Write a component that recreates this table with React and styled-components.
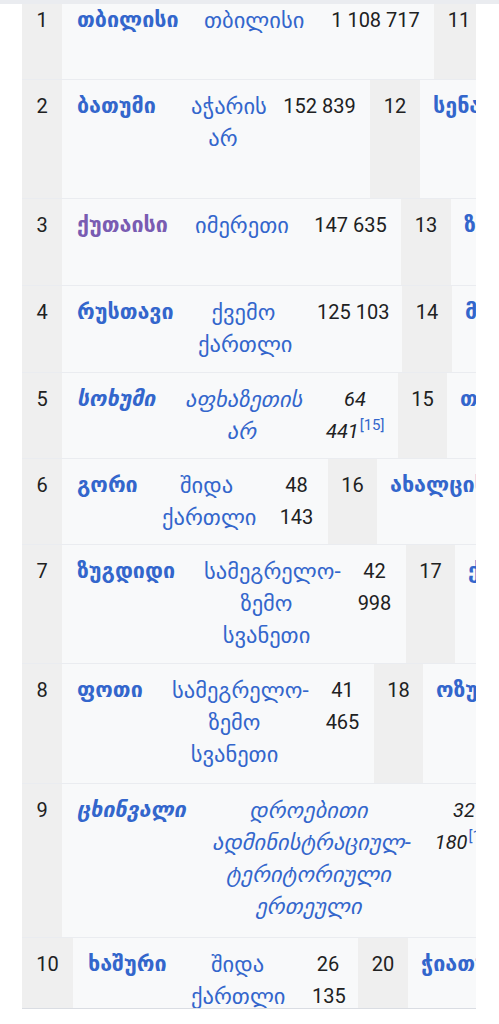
import React from "react";
import styled, { createGlobalStyle } from "styled-components";

const linkBlue = "#3366cc";
const visited = "#795cb2";
const textColor = "#202122";
const cellGray = "#efefef";
const cellLight = "#f8f9fa";

const GlobalStyle = createGlobalStyle`
    html, body {
        margin: 0;
        padding: 0;
        background: #fff;
    }
    body {
        font-family: Roboto, "Noto Sans", "DejaVu Sans", sans-serif;
        font-size: 20px;
        line-height: 32px;
        color: ${textColor};
    }
`;

const Page = styled.div`
    width: 499px;
    height: 1024px;
    overflow: hidden;
    background: #fff;
`;

const TopStrip = styled.div`
    height: 4px;
    background: #eaecf0;
`;

const Viewport = styled.div`
    margin: 0 23px 0 22px;
    height: 1004px;
    overflow: hidden;
    border-bottom: 1px solid #dadde3;
`;

const Table = styled.div`
    margin-top: -10px;
    width: 560px;
`;

const Row = styled.div`
    display: flex;
    box-sizing: border-box;
    height: ${props => props.$h}px;
    border-bottom: 1px solid #eaecf0;
    background: #fff;
`;

const Cell = styled.div`
    flex: 0 0 auto;
    box-sizing: border-box;
    width: ${props => props.$w}px;
    padding: 10px 14px;
    background: ${cellLight};
    text-align: center;
    white-space: nowrap;
    font-size: ${props => props.$size || 20}px;
    line-height: 32px;
    font-style: ${props => props.$italic ? "italic" : "normal"};
`;

const NumCell = styled(Cell)`
    background: ${cellGray};
    padding: 10px 0;
`;

const CityCell = styled(Cell)`
    text-align: left;
    padding-left: 15px;
    padding-right: 0;
`;

const RestCell = styled(Cell)`
    flex: 1 0 auto;
    text-align: left;
    padding-left: 13px;
`;

const CityLink = styled.a`
    color: ${props => props.$visited ? visited : linkBlue};
    font-weight: 700;
    text-decoration: none;
`;

const RegionLink = styled.a`
    color: ${linkBlue};
    text-decoration: none;
`;

const Line = styled.div`
    line-height: 32px;
`;

const Ref = styled.sup`
    font-size: 15px;
    line-height: 0;
    font-style: normal;
    color: ${linkBlue};
    vertical-align: 8px;
    margin-left: 1px;
`;

const rows = [
    { n: 1, city: "თბილისი", region: ["თბილისი"], pop: ["1 108 717"], n2: 11, city2: "სამტრედია", w: [40, 128, 127, 117, 50], h: 86 },
    { n: 2, city: "ბათუმი", region: ["აჭარის", "არ"], pop: ["152 839"], n2: 12, city2: "სენაკი", w: [40, 115, 92, 101, 50], h: 119 },
    { n: 3, city: "ქუთაისი", visited: true, region: ["იმერეთი"], pop: ["147 635"], n2: 13, city2: "ზესტაფონი", w: [40, 119, 119, 101, 50], h: 87 },
    { n: 4, city: "რუსთავი", region: ["ქვემო", "ქართლი"], pop: ["125 103"], n2: 14, city2: "მარნეული", w: [40, 122, 119, 99, 50], h: 87 },
    { n: 5, city: "სოხუმი", italic: true, region: ["აფხაზეთის", "არ"], pop: ["64", "441"], ref: "[15]", n2: 15, city2: "თელავი", w: [40, 109, 141, 86, 49], h: 86 },
    { n: 6, city: "გორი", region: ["შიდა", "ქართლი"], pop: ["48", "143"], n2: 16, city2: "ახალციხე", w: [40, 86, 117, 63, 49], h: 86 },
    { n: 7, city: "ზუგდიდი", region: ["სამეგრელო-", "ზემო", "სვანეთი"], pop: ["42", "998"], n2: 17, city2: "ქობულეთი", w: [40, 128, 153, 63, 49], h: 119 },
    { n: 8, city: "ფოთი", region: ["სამეგრელო-", "ზემო", "სვანეთი"], pop: ["41", "465"], n2: 18, city2: "ოზურგეთი", w: [40, 96, 153, 63, 49], h: 120 },
    { n: 9, city: "ცხინვალი", italic: true, region: ["დროებითი", "ადმინისტრაციულ-", "ტერიტორიული", "ერთეული"], pop: ["32", "180"], ref: "[15]", n2: 19, city2: "კასპი", w: [40, 136, 221, 90, 50], h: 154 },
    { n: 10, city: "ხაშური", region: ["შიდა", "ქართლი"], pop: ["26", "135"], n2: 20, city2: "ჭიათურა", w: [51, 104, 121, 60, 50], h: 88 },
];

const CityRow = ({ row }) => {
    const [wNum, wCity, wRegion, wPop, wNum2] = row.w;
    return (
        <Row $h={row.h}>
            <NumCell $w={wNum}>{row.n}</NumCell>
            <CityCell $w={wCity} $italic={row.italic} $size={21.5}>
                <CityLink $visited={row.visited}>{row.city}</CityLink>
            </CityCell>
            <Cell $w={wRegion} $italic={row.italic} $size={22.5}>
                {row.region.map((line, i) => (
                    <Line key={i}><RegionLink>{line}</RegionLink></Line>
                ))}
            </Cell>
            <Cell $w={wPop} $italic={row.italic}>
                {row.pop.map((line, i) => (
                    <Line key={i}>
                        {line}
                        {row.ref && i === row.pop.length - 1 && <Ref>{row.ref}</Ref>}
                    </Line>
                ))}
            </Cell>
            <NumCell $w={wNum2}>{row.n2}</NumCell>
            <RestCell $size={21.5}>
                <CityLink>{row.city2}</CityLink>
            </RestCell>
        </Row>
    );
};

const App = () => (
    <Page>
        <GlobalStyle />
        <TopStrip />
        <Viewport>
            <Table>
                {rows.map(row => <CityRow key={row.n} row={row} />)}
            </Table>
        </Viewport>
    </Page>
);

export default App;
